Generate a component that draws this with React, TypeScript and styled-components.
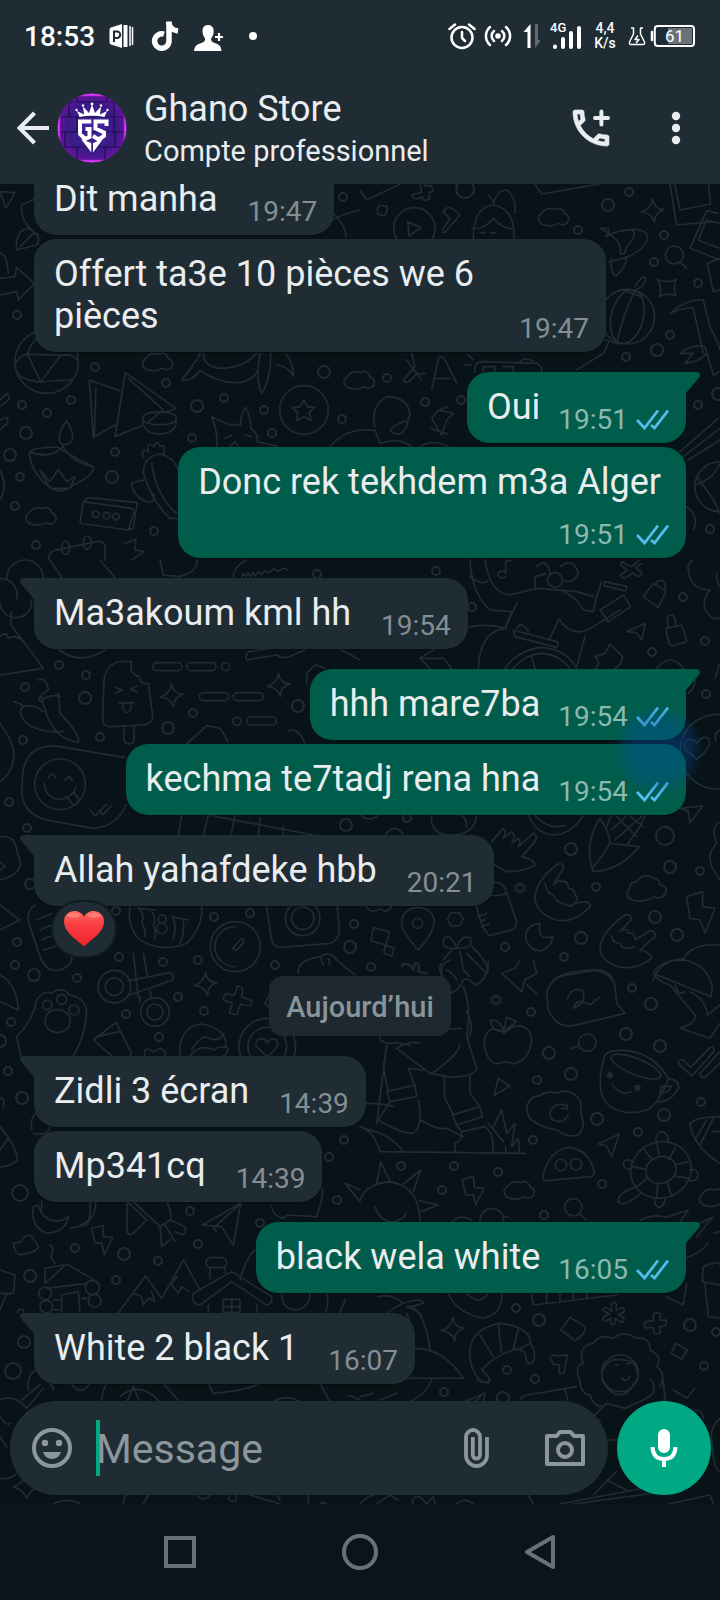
import React from 'react';
import styled, { createGlobalStyle, css } from 'styled-components';

const color = {
  bar: '#202c33',
  wall: '#081318',
  doodle: '#212c32',
  nav: '#0b141a',
  incoming: '#202c33',
  outgoing: '#005c4b',
  text: '#e9edef',
  muted: '#848e94',
  icon: '#8c979d',
  tick: '#53bdeb',
  accent: '#00a884',
};

const GlobalStyle = createGlobalStyle`
  * { box-sizing: border-box; }
  body {
    margin: 0;
    background: ${color.nav};
    font-family: Roboto, "Noto Sans", sans-serif;
    color: ${color.text};
  }
  button { font: inherit; color: inherit; background: none; border: 0; padding: 0; }
  svg { display: block; flex: none; }
`;

const Screen = styled.div`
  display: flex;
  flex-direction: column;
  height: 100vh;
`;

const StatusBar = styled.div`
  display: flex;
  align-items: center;
  justify-content: space-between;
  flex: none;
  height: 72px;
  padding: 0 25px 0 24px;
  background: ${color.bar};
  color: #fff;
`;

const StatusGroup = styled.div<{ $gap: number }>`
  display: flex;
  align-items: center;
  gap: ${(p) => p.$gap}px;
`;

const Clock = styled.time`
  width: 68px;
  padding-top: 2px;
  font-size: 28px;
  font-weight: 500;
  line-height: 32px;
`;

const Signal = styled.div`
  display: grid;
  width: 34px;
  > * { grid-area: 1 / 1; }
`;

const NetworkLabel = styled.span`
  align-self: start;
  padding-left: 2px;
  font-size: 13px;
  font-weight: 500;
  line-height: 12px;
`;

const Speed = styled.div`
  width: 30px;
  font-size: 14px;
  font-weight: 500;
  line-height: 15px;
  text-align: center;
`;

const BatteryBox = styled.div`
  display: grid;
  > * { grid-area: 1 / 1; }
`;

const BatteryLevel = styled.span`
  padding-left: 4px;
  font-size: 17px;
  line-height: 24px;
  text-align: center;
`;

const AppBar = styled.header`
  display: flex;
  align-items: center;
  flex: none;
  height: 112px;
  padding: 0 20px 0 16px;
  background: ${color.bar};
`;

const BackButton = styled.button`
  display: flex;
  align-items: center;
  gap: 7px;
`;

const Contact = styled.div`
  display: flex;
  flex: 1;
  flex-direction: column;
  gap: 4px;
  min-width: 0;
  padding-left: 17px;
  white-space: nowrap;
`;

const ContactName = styled.h1`
  margin: 0;
  font-size: 36px;
  font-weight: 400;
  line-height: 42px;
`;

const ContactKind = styled.p`
  margin: 0;
  font-size: 29px;
  line-height: 34px;
`;

const BarActions = styled.div`
  display: flex;
  gap: 37px;
`;

const Chat = styled.main`
  position: relative;
  display: flex;
  flex: 1;
  flex-direction: column;
  min-height: 0;
  overflow: hidden;
  background: ${color.wall};
`;

const Wallpaper = styled.svg`
  position: absolute;
  inset: 0;
  width: 100%;
  height: 100%;
`;

const MessageList = styled.ol`
  position: relative;
  display: flex;
  flex: 1;
  flex-direction: column;
  justify-content: flex-end;
  gap: 20px;
  min-height: 0;
  margin: 0;
  padding: 0 34px 17px;
  overflow: hidden;
  list-style: none;
  > * { flex: none; }
`;

const Group = styled.li<{ $out?: boolean }>`
  display: flex;
  flex-direction: column;
  align-items: ${(p) => (p.$out ? 'flex-end' : 'flex-start')};
  gap: 4px;
`;

const Bubble = styled.article<{ $out?: boolean; $tail?: boolean; $stacked?: boolean }>`
  position: relative;
  display: flex;
  align-items: flex-end;
  max-width: 572px;
  padding: 14px 17px 7px 20px;
  border-radius: 22px;
  background: ${(p) => (p.$out ? color.outgoing : color.incoming)};
  box-shadow: 0 1px 1px rgba(0, 0, 0, 0.3);
  ${(p) => p.$tail && (p.$out ? 'border-top-right-radius: 0;' : 'border-top-left-radius: 0;')}
  ${(p) =>
    p.$stacked &&
    css`
      flex-direction: column;
      gap: 8px;
    `}
`;

const BubbleText = styled.p<{ $stacked?: boolean }>`
  flex: 1;
  margin: 0;
  padding: 0 ${(p) => (p.$stacked ? 8 : 0)}px 8px 0;
  font-size: 36px;
  line-height: 42px;
`;

const Meta = styled.span<{ $out?: boolean }>`
  display: flex;
  align-items: center;
  gap: 8px;
  margin-left: ${(p) => (p.$out ? 18 : 30)}px;
  font-size: 28px;
  line-height: 32px;
  color: ${(p) => (p.$out ? '#8cb8b0' : color.muted)};
`;

const Tail = styled.svg<{ $out?: boolean }>`
  position: absolute;
  top: 0;
  ${(p) => (p.$out ? 'right: -14px;' : 'left: -14px; transform: scaleX(-1);')}
`;

const TouchSpot = styled.span`
  position: absolute;
  top: -40px;
  right: -18px;
  width: 92px;
  height: 92px;
  border-radius: 50%;
  background: radial-gradient(closest-side, rgba(0, 80, 160, 0.4) 45%, rgba(0, 80, 160, 0.3) 72%, rgba(0, 80, 160, 0));
  pointer-events: none;
`;

const Reaction = styled.button`
  position: relative;
  display: grid;
  place-items: center;
  width: 66px;
  height: 58px;
  margin: -10px 0 -2px 17px;
  border: 2px solid #101b21;
  border-radius: 29px;
  background: ${color.incoming};
`;

const DayMark = styled.li`
  align-self: center;
  padding: 15px 17px 13px;
  border-radius: 14px;
  background: #1d282f;
  font-size: 29px;
  font-weight: 500;
  line-height: 32px;
  color: #89949a;
`;

const Composer = styled.form`
  position: relative;
  display: flex;
  flex: none;
  gap: 9px;
  padding: 0 9px 9px 10px;
`;

const Field = styled.div`
  display: flex;
  flex: 1;
  align-items: center;
  min-width: 0;
  height: 94px;
  padding: 0 23px 0 18px;
  border-radius: 47px;
  background: ${color.bar};
  color: ${color.icon};
`;

const Caret = styled.span`
  flex: none;
  width: 4px;
  height: 56px;
  margin-left: 20px;
  background: ${color.accent};
`;

const TextBox = styled.input`
  flex: 1;
  min-width: 0;
  margin-left: -4px;
  padding: 2px 0 0;
  border: 0;
  outline: 0;
  background: none;
  color: ${color.text};
  font: 41px/48px Roboto, sans-serif;
  &::placeholder { color: ${color.icon}; opacity: 1; }
`;

const FieldActions = styled.div`
  display: flex;
  align-items: center;
  gap: 56px;
`;

const MicButton = styled.button`
  display: grid;
  place-items: center;
  flex: none;
  width: 94px;
  height: 94px;
  border-radius: 50%;
  background: ${color.accent};
`;

const NavBar = styled.nav`
  display: flex;
  flex: none;
  height: 96px;
  padding: 0 90px;
  background: ${color.nav};
`;

const NavButton = styled.button`
  display: grid;
  flex: 1;
  place-items: center;
`;

/* ---------- wallpaper ---------- */

type Ring = [number, number, number];

const rings: Ring[] = [
  [343, 197, 4], [17, 315, 4], [95, 367, 4], [166, 383, 4], [197, 406, 6], [224, 398, 4], [264, 410, 4],
  [272, 433, 4], [324, 372, 6], [342, 419, 4], [192, 438, 4], [22, 405, 4], [71, 400, 4], [47, 413, 4],
  [26, 433, 6], [10, 455, 6], [115, 452, 4], [112, 477, 6], [20, 477, 4], [15, 506, 4], [154, 531, 4],
  [36, 545, 4], [629, 192, 4], [608, 205, 6], [578, 230, 4], [664, 235, 4], [654, 262, 4], [698, 283, 4],
  [670, 335, 4], [657, 350, 6], [626, 357, 4], [387, 378, 4], [425, 402, 4], [461, 400, 4], [698, 405, 4],
  [710, 529, 4], [465, 189, 9], [718, 394, 6], [59, 665, 4], [86, 675, 4], [25, 687, 4], [85, 698, 6],
  [23, 740, 4], [100, 737, 4], [168, 728, 6], [193, 713, 4], [298, 706, 6], [9, 802, 4], [27, 828, 4],
  [346, 825, 6], [317, 574, 4], [30, 884, 5], [116, 911, 4], [214, 917, 4], [250, 913, 4], [354, 924, 4],
  [17, 942, 4], [119, 957, 4], [163, 962, 4], [198, 960, 4], [15, 965, 4], [34, 975, 6], [275, 965, 4],
  [350, 947, 6], [436, 571, 4], [472, 607, 4], [683, 597, 4], [705, 641, 4], [652, 652, 4], [706, 694, 4],
  [407, 818, 4], [571, 849, 6], [665, 836, 9], [670, 867, 6], [700, 871, 4], [520, 888, 4], [596, 887, 4],
  [655, 917, 6], [677, 935, 6], [581, 938, 6], [505, 947, 4], [564, 957, 4], [371, 967, 4], [77, 978, 4],
  [178, 997, 4], [126, 1014, 4], [204, 1011, 4], [159, 1037, 4], [11, 1022, 4], [8, 1071, 4], [22, 1098, 6],
  [0, 1041, 6], [20, 1193, 8], [190, 1211, 4], [329, 1157, 4], [344, 1140, 4], [337, 1200, 4],
  [75, 1248, 4], [198, 1244, 4], [124, 1254, 6], [158, 1261, 4], [30, 1276, 6], [116, 1280, 4],
  [260, 1223, 4], [24, 1342, 6], [13, 1371, 8], [496, 1000, 4], [531, 1012, 4], [632, 988, 4],
  [651, 1004, 6], [626, 1034, 6], [549, 1053, 6], [660, 1046, 6], [571, 1074, 6], [537, 1080, 4],
  [597, 1119, 6], [664, 1115, 6], [701, 1102, 4], [638, 1132, 4], [533, 1140, 4], [602, 1184, 4],
  [401, 1166, 4], [454, 1166, 4], [498, 1172, 4], [442, 1190, 4], [544, 1215, 4], [516, 1308, 4],
  [539, 1320, 6], [690, 1325, 6], [507, 1370, 4], [535, 1379, 4], [704, 1366, 4], [444, 1392, 4],
  [503, 1398, 6], [716, 1332, 4],
];

const Cloud = ({ x, y }: { x: number; y: number }) => (
  <path transform={`translate(${x} ${y})`} d="M-38 22Q-58 5-38-10Q-25-30 0-22Q22-32 30-10Q52 0 38 20Q25 28 12 20Q-10 34-38 22Z" />
);
const Sparkle = ({ x, y }: { x: number; y: number }) => (
  <path transform={`translate(${x} ${y})`} d="M0-35Q4-4 34-4Q6 4 6 34Q-4 6-34 4Q-4-6 0-35Z" />
);

const Sheet = ({ x, y, children }: { x: number; y: number; children: React.ReactNode }) => (
  <g transform={`translate(${x} ${y}) scale(0.3333)`} strokeWidth="5">
    {children}
  </g>
);

const Doodles = () => (
  <Wallpaper viewBox="0 184 720 1320" preserveAspectRatio="xMidYMin slice" aria-hidden="true" fill="none" stroke={color.doodle} strokeLinecap="round" strokeLinejoin="round">
    <g strokeWidth="2">
      {rings.map(([cx, cy, r]) => (
        <circle key={`${cx}-${cy}`} cx={cx} cy={cy} r={r} />
      ))}
    </g>
    <Sheet x={0} y={180}>
      <circle cx="140" cy="545" r="95" />
      <path d="M82 522L182 526L122 606ZM82 522Q100 470 140 452M182 526Q225 520 234 545M122 606Q60 600 50 575M82 522Q60 525 46 550M122 606Q180 600 215 600" />
      <Cloud x={475} y={545} />
      <Cloud x={125} y={1008} />
      <Cloud x={1080} y={600} />
      <path d="M268 600L358 632M268 600L280 772L345 735M288 622L283 765M376 578L528 685L500 696M376 578L345 770L430 735M385 595L490 690L445 725" />
      <path d="M430 715a50 16 0 1 0 98 0a50 16 0 1 0 -98 0V735Q440 762 480 762Q520 760 528 735V715" />
      <path d="M545 600Q590 545 600 520M545 600Q575 605 600 572Q660 612 720 608Q760 600 775 570M610 520Q610 560 660 565Q730 565 770 520M780 520Q765 600 785 640Q812 600 812 520M830 555Q870 560 880 590Q880 550 860 525" />
      <path d="M650 800Q655 760 635 710L690 735Q710 730 722 738Q722 700 737 682Q755 720 752 745Q780 765 770 785L830 798M675 775l20-8M735 765l20 5M690 800l15-15 10 15" />
      <circle cx="912" cy="690" r="73" />
      <path d="M912 660l10 20 22 2-16 15 5 25-22-12-20 12 2-24-16-15 24-3zM990 800Q1030 755 1080 750" />
      <path d="M88 815Q90 870 140 915Q180 950 220 915Q285 885 280 860Q200 820 175 802Q110 800 88 815Q150 840 190 800M280 860Q220 850 190 800M200 722Q160 780 190 795Q240 790 200 722M120 870L150 905 175 868 200 905 225 890 210 925H150Z" />
      <path d="M430 830Q420 800 445 815Q440 780 462 800Q470 775 480 800Q500 790 490 825M430 880Q430 830 480 822Q520 830 535 870M430 880Q460 970 510 1015H535M455 850Q470 950 530 1000M395 910Q400 950 440 965Q470 970 460 940M395 910L430 900" />
      <path d="M250 965L395 985Q405 990 400 1005L385 1050L240 1030ZM250 965L265 953L412 968L400 1045L385 1050" />
      <circle cx="287" cy="1003" r="10" /><circle cx="320" cy="1007" r="10" /><circle cx="348" cy="1010" r="10" />
      <path d="M145 1140Q145 1110 180 1108L290 1085Q318 1080 315 1110V1140M373 1090L408 1078 405 1110 433 1115 395 1140" />
      <ellipse cx="197" cy="1103" rx="12" ry="20" /><ellipse cx="262" cy="1088" rx="12" ry="20" />
      <path d="M0 345L50 335 55 360 103 310 50 262 45 290 0 295M0 35L45 38 18 85ZM50 210Q45 150 85 145Q130 170 110 195ZM60 200L100 160M65 75Q60 130 115 165M65 75L110 55M980 130Q1030 100 1080 90M1000 100Q1040 140 1038 172M0 220Q20 220 25 280M0 660L20 640Q35 655 20 665L0 680M0 720L20 712Q30 730 15 735L0 750M0 870Q25 920 0 960" />
    </Sheet>
    <Sheet x={360} y={180}>
      <path d="M0 30L20 60 125 10M155 45l30-8-5-25M155 45q10 20 30 5l8 12 15-5 0-20q20 0 5-20l-20 0M52 85l8-10 22 5-3 20-8 8-18-6z" />
      <circle cx="163" cy="145" r="62" />
      <path d="M143 125l40 18-36 25zM250 95q10-20 30-8l20 18-45 52q-10 0-6-10l20-30z" />
      <path d="M340 175Q340 80 400 75Q465 85 462 175M400 115Q370 150 345 145M400 115Q430 150 460 145M385 45Q405 65 400 75Q410 30 440 30Q470 50 465 100M335 145h10M360 158h15M392 158h15" />
      <Cloud x={583} y={110} />
      <path d="M525 12L545 42 720 12" />
      <Sparkle x={878} y={92} />
      <path d="M930 12L950 135 1060 125M945 15L960 90 1052 72 1045 12M1075 100L1040 92 990 205 1080 240M1080 130L1040 120 1015 180 1080 205M1080 235L1042 250 1060 335 1080 330" />
      <path d="M720 145Q790 180 780 220Q795 230 800 200Q840 160 810 148M720 145Q760 140 740 165M738 170Q770 150 820 148Q870 150 862 180Q840 230 745 245M755 235Q750 280 768 288Q800 260 800 230" />
      <circle cx="943" cy="225" r="27" />
      <path d="M960 245l20 20M893 298Q922 312 948 298Q938 320 948 348Q920 335 898 350Q908 325 893 298Z" />
      <circle cx="802" cy="410" r="82" />
      <ellipse cx="802" cy="410" rx="48" ry="82" transform="rotate(14 802 410)" />
      <path d="M825 332Q790 400 770 490M790 330L845 350M735 480L780 492M745 490L730 520 650 570M825 320Q850 280 857 295Q855 320 830 328" />
      <path d="M155 520L165 560 130 600Q140 620 165 585L195 580M140 540L185 600M215 630L235 535Q245 525 255 540L290 610M225 595H270" />
      <path d="M345 575Q340 545 370 545L530 550Q548 560 545 575M370 575V560H405V575M430 560h30v15M480 545q10-15 40-2M315 555h20M325 525l15 15" />
      <path d="M45 740Q30 680 80 650Q140 650 150 700L140 740Q120 780 90 750Q100 735 145 720M0 750H45L60 790Q120 770 155 800M180 800Q220 775 265 800" />
      <path d="M215 715L245 765 260 720 280 700 235 690ZM240 690l20-10M262 762L210 745" />
      <path d="M930 400Q980 355 1030 360L1050 440Q1080 500 1080 510M930 400Q980 380 1000 385L1030 520M960 520Q1000 490 1035 500L1060 585 1080 575M960 520L1000 520 975 550Q1020 545 1040 520" />
      <path d="M960 815L1075 715M970 830L1080 745M985 840L1080 780M1005 915Q1060 900 1080 850M1010 890Q1060 950 1080 1000M980 980Q1020 1010 1000 1050" />
      <circle cx="1080" cy="920" r="75" />
    </Sheet>
    <Sheet x={0} y={560}>
      <path d="M20 55a50 50 0 0 1 110 0M0 130a45 45 0 1 0 95-10M33 155V195L130 325 0 345M0 230Q20 210 25 235Q50 220 75 250M0 55a50 50 0 0 1 50 60M150 0L185 52M300 0L345 52" />
      <path d="M395 305Q320 295 312 360L308 480Q310 500 335 500L430 495Q460 490 458 465L445 370Q420 375 418 350Q385 340 395 305ZM372 500V540Q375 552 388 552Q402 550 402 540V498M345 382l22 8-20 10M412 378l-20 10 20 8M358 430L402 428M368 432Q370 458 382 458Q395 455 393 430" />
      <rect x="458" y="308" width="88" height="24" rx="12" /><rect x="560" y="308" width="88" height="24" rx="12" />
      <rect x="598" y="398" width="88" height="24" rx="12" /><rect x="700" y="398" width="90" height="24" rx="12" />
      <rect x="740" y="471" width="88" height="24" rx="12" />
      <circle cx="677" cy="320" r="12" /><circle cx="711" cy="484" r="12" />
      <Sparkle x={515} y={407} />
      <Sparkle x={836} y={375} />
      <path d="M115 360Q140 350 145 390Q110 410 120 425Q150 400 180 410M125 410Q150 540 235 547Q240 520 180 460L175 400M42 425Q65 430 70 440Q50 460 80 490Q120 520 190 515M70 440Q100 430 130 455" />
      <path d="M375 593L175 559Q80 550 68 640L65 700Q70 760 140 780L280 805Q350 800 378 735" />
      <circle cx="180" cy="673" r="76" />
      <path d="M132 670Q140 720 185 718Q220 710 228 680M145 655q12-25 22 0M195 660q12-20 22 2M200 710l20 25q20 0 15-20l-15-20M270 750l15 18 35-35M298 752l10 12 26-26" />
      <path d="M560 552L620 497 660 505 685 545M865 515q15-15 40 15l10 20M920 370l0-30 25-25 30 10M545 765L535 825M625 765L610 825M705 765L693 825M780 775L775 825M625 765L940 825M850 800V825" />
      <path d="M0 830Q45 825 50 870L62 910Q60 945 0 960M0 905L15 920 0 930M0 1035L58 1080 0 1110M0 490Q50 560 40 600Q35 640 0 665" />
      <path d="M105 1035Q80 1050 85 1085L120 1190Q140 1240 180 1230Q220 1215 215 1190M110 1080L155 1060M120 1110L155 1095M125 1140L160 1125M130 1170L170 1158" />
      <path d="M390 1040Q380 1100 420 1140Q490 1180 560 1150Q610 1100 605 1040M415 1045L465 1050M420 1050q15 20 5 40 15 20 10 40M455 1055q15 20 5 40 10 20 5 40M515 1070L565 1080M520 1075q10 30 0 60M550 1080q5 40-10 70" />
      <circle cx="487" cy="1077" r="12" /><circle cx="485" cy="1105" r="16" />
      <circle cx="706" cy="1160" r="75" />
      <path d="M705 1220A60 60 0 0 1 705 1100M698 1165l25-28q15 0 5 15l-20 20z" />
      <path d="M800 1040L815 1140Q820 1165 850 1162L990 1150Q1018 1140 1018 1110L1012 1040M895 1240Q890 1200 960 1190Q990 1170 1010 1200L1065 1245M960 1190l10 25M985 1195l5 20" />
      <circle cx="908" cy="1075" r="52" /><circle cx="908" cy="1075" r="34" />
      <path d="M480 0L490 45 540 50Q600 30 590 0M700 50Q700 20 740 0M725 50l5-10 8 10 5-12 8 12 8-14 6 12 10-14 8 10 14-12 6 6 20-12 10 8 20-10 10 6M175 267Q240 320 320 267M740 300L830 285Q850 300 880 285L915 270M740 300Q735 285 745 275L800 267M1020 267L1080 300" />
    </Sheet>
    <Sheet x={360} y={560}>
      <path d="M330 0Q335 100 390 150L455 155 435 205 470 130M375 0Q390 100 450 105L530 85M330 50Q370 80 385 60M435 50a12 10 0 1 1 2-10V5L457 0" />
      <circle cx="585" cy="60" r="22" />
      <path d="M525 90V50L560 40M530 20Q560-10 570 40M600 20Q640-10 655 40Q640 75 610 60M600 90Q650 110 670 150L700 155 710 110 725 65M530 85Q600 90 650 95L700 110M570 235L597 178Q640 240 700 200L780 150M735 65l65 15q0 15-8 12l-60-15zM720 150L790 105 812 140 745 185ZM650 320L675 230" />
      <path d="M180 295L325 205M210 325L180 295H250L275 325M355 325Q360 210 440 205Q380 190 330 200M460 210L590 245Q600 255 590 262L465 230ZM470 205q15-25 35 10M435 325Q480 265 550 262Q620 270 650 325M460 325Q500 280 550 280Q600 285 630 325M515 290l10 35" />
      <path d="M785 5l30 15 25-20M785 5l-3 10 20 15-20 15q5 15 20 5l15-10 20 10q15-5 5-15l-15-12 18-12M850 110L880 70 918 95 895 142ZM890 75Q885 60 905 62Q920 65 915 90M985 30Q990 90 1050 90M1000 0Q980 10 985 30M1050 90Q1010 140 1060 175H1080M1070 40Q1070 70 1080 80" />
      <path d="M918 205L965 195 980 240Q978 250 960 250L935 258Q925 255 918 205ZM925 200Q915 165 935 165Q950 170 945 195M800 215L857 190 845 240 830 218ZM705 290L735 280 750 252 788 290Q785 315 765 325M705 290l12 20-10 15M890 325Q930 275 970 325M985 400Q1010 380 1003 350M1065 355L1080 310" />
      <circle cx="1072" cy="575" r="112" />
      <path d="M1010 598L975 565Q970 540 990 538Q1005 540 1012 550Q1025 525 1045 535Q1060 560 1010 598ZM960 745L1028 738 990 788 985 755ZM1080 510Q1060 520 1068 545" />
      <path d="M215 765Q210 820 260 825Q340 830 350 770M300 765Q320 770 320 800M505 765Q530 825 585 825Q640 820 670 765M525 765Q560 810 615 797M0 765Q30 790 55 765M75 825Q105 785 130 825" />
      <path d="M700 935Q670 850 720 775Q750 820 750 850Q700 930 700 915M750 850L838 860Q780 930 705 935M740 800L755 765M855 770L840 800 800 855M770 770L830 830M810 768L850 800M765 840L850 765M755 810L800 768" />
      <path d="M395 845L430 805Q440 815 430 835L455 815Q470 825 455 850L475 835Q485 845 475 860L520 820Q535 825 525 845L485 890Q525 900 525 915Q500 935 440 935Q410 920 395 905" />
      <path d="M525 1010Q530 960 590 915Q605 905 612 922L580 975Q600 955 605 965Q625 960 625 985Q645 985 645 1005Q660 1010 645 1030L680 1025Q700 1035 685 1045Q640 1090 590 1080Q525 1060 525 1010ZM555 970Q560 1000 580 1005Q590 1030 610 1030Q630 1045 645 1030" />
      <path d="M720 1160Q730 1110 795 1065Q810 1060 815 1078L780 1115Q800 1100 805 1120Q825 1115 825 1140L870 1112Q890 1115 885 1130L840 1170Q870 1175 875 1195Q830 1230 780 1222Q720 1205 720 1160ZM755 1130Q760 1150 780 1150Q790 1175 825 1160" />
      <path d="M815 1020Q790 1005 810 985Q810 965 830 965Q850 935 880 955Q900 955 900 975Q925 980 917 1000Q905 1020 885 1010Q850 1030 815 1020ZM980 1010L1028 995V1040L1065 1045 1035 1118 1020 1080 990 1075Z" />
      <path d="M350 1040Q370 1120 390 1127L455 1110Q470 1105 470 1085L435 985Q420 960 390 970M355 1070l25-10M360 1085l15-6M365 1100l22-8M390 1005Q420 1010 440 1000M20 1040q15 25 40 5 15 20 35-5" />
      <path d="M175 1170Q120 1110 125 1085Q130 1045 175 1042Q220 1048 223 1085Q220 1120 175 1170ZM262 1078l12-20h24l12 20-12 20h-24zM540 1090Q495 1095 497 1135Q510 1175 545 1172Q575 1160 578 1130Q530 1145 540 1090ZM40 1103L88 1115 78 1155 33 1143ZM75 1155L102 1165 95 1188 72 1180Z" />
      <circle cx="173" cy="1090" r="15" />
      <path d="M290 1165Q240 1170 252 1135Q275 1120 290 1165Q305 1120 330 1135Q345 1165 290 1165ZM250 1200L275 1170M245 1210Q230 1230 255 1260M300 1175L310 1230 330 1250M335 1160Q380 1200 385 1235M290 1260Q280 1240 260 1230M320 1180L380 1240M125 1220Q140 1200 160 1225Q160 1205 175 1210Q180 1225 175 1235L200 1240M880 1260Q900 1200 975 1195M975 1190Q1000 1150 1080 1155M1080 785Q1050 800 1070 850Q1040 880 1055 920L1080 960M580 1260Q620 1230 700 1230Q750 1240 755 1260" />
    </Sheet>
    <Sheet x={0} y={960}>
      <path d="M50 230Q100 180 110 120Q130 90 155 100Q185 75 210 105Q260 115 260 160Q255 230 220 288M50 230L62 288" />
      <ellipse cx="173" cy="183" rx="38" ry="34" />
      <circle cx="142" cy="135" r="14" /><circle cx="185" cy="118" r="15" /><circle cx="222" cy="150" r="15" />
      <circle cx="343" cy="80" r="49" /><circle cx="343" cy="80" r="27" /><circle cx="465" cy="156" r="43" /><circle cx="465" cy="156" r="24" />
      <path d="M385 62L510 38Q525 45 518 60L390 105M415 112L400-20M430-20L442 48M420 112V130M450 92L455 115" />
      <path d="M280 240L348 187 395 280 390 288M280 240L335 288M290 230L360 215" />
      <Sparkle x={617} y={72} />
      <path d="M712 78Q725 78 728 88L725 110 755 122Q755 138 748 138L722 132 712 162Q700 166 688 158L698 130 670 120Q672 104 680 100L703 106Z" />
      <path d="M540 288Q535 200 605 192Q680 205 678 260M615 230Q660 250 672 220M575 270Q590 240 615 230M570 288Q600 250 640 270Q660 255 685 265Q685 280 670 288M0 45Q50 70 55 150L0 125M435 288Q430 265 445 268L460 275 480 265Q500 270 495 288M810 100L795 130 812 145" />
      <circle cx="802" cy="260" r="85" /><circle cx="802" cy="260" r="58" />
      <path d="M802 290L768 258Q765 235 785 235Q798 238 802 248Q810 235 825 237Q850 250 802 290Z" />
      <path d="M100 740Q90 800 140 820Q200 815 205 770Q180 790 150 780Q120 765 115 735ZM125 725V750M240 795Q290 780 287 725M210 805L260 795Q275 770 270 725" />
      <path d="M382 725V815Q385 830 400 820L440 780M382 725L440 780M400 725L480 800M500 725Q520 770 510 780L480 800L485 860 510 840M510 780L555 800Q560 815 550 825L525 815M495 795L525 845" />
      <path d="M607 795L722 730 700 855 665 800ZM722 730L640 805 650 815M815 740Q820 770 850 775L860 765 950 770Q970 710 968 690L955 672M1035 670L1080 725M1035 670L1080 690M1020 820L1080 790" />
      <path d="M40 850L65 845Q70 825 90 825L100 835 115 860Q110 875 90 878L60 885Q45 880 40 850ZM275 805L310 797V830L338 833 313 885 305 850 285 848ZM150 855Q165 865 155 880Q150 895 165 910" />
      <path d="M135 970L200 912 290 965M140 985L262 970M135 925V970M135 925L190 915M185 1058V1005L235 995 240 1055M160 1020h20M245 1015h15M160 1050h22M0 930L45 945 40 1000 0 1000M20 1000L0 1050" />
      <circle cx="135" cy="1000" r="19" /><circle cx="139" cy="1040" r="19" /><circle cx="277" cy="983" r="21" /><circle cx="284" cy="1022" r="19" />
      <path d="M355 1058L437 948 485 1015 550 900 600 990M400 1000l25 10 5 25 15-20 20 10-10-30M530 950l-15 25 20 25 10-20 20 15" />
      <path d="M580 1000L695 935 815 1010Q820 1030 800 1035L695 965 600 1035Q570 1030 580 1000ZM625 1035V1058M770 1035V1058M670 1018h50v40h-50zM695 1018v40M670 1040h50M630 955V923M675 940V923" />
      <rect x="618" y="893" width="62" height="30" rx="15" />
      <path d="M720 960Q740 890 765 870M845 1000Q845 1050 890 1050Q930 1040 930 1000M980 1000Q990 1030 975 1058M1035 1020L1020 1058M0 500Q50 560 52 600Q40 615 0 622M25 535L0 570M95 510Q90 470 110 460M100 520Q140 530 150 500M0 415Q15 410 10 440M52 1058a10 10 0 1 1 18 5M85 1290Q80 1250 105 1230Q160 1270 160 1290" />
    </Sheet>
    <Sheet x={360} y={960}>
      <path d="M245 50Q240 10 270 0M270 100Q300 90 310 60Q320 50 345 75Q385 60 385 0M310 80Q335 140 320 230L350 325Q340 355 260 350L210 340 110 265Q150 240 180 250M305 205L200 210M320 155Q345 200 325 235M60 230Q60 255 110 248L150 255M80 255L70 320 85 400M80 255L50 490M145 325L165 380M145 325L190 330M80 395L165 375 170 410 90 425ZM90 425L55 480Q120 520 160 520Q190 500 175 420M300 255Q290 290 215 340M253 350V410L280 465M330 350L330 400 360 440M278 465L360 440 368 470 290 495ZM290 495L305 515 375 500M305 515Q310 540 285 550V575M375 500Q405 520 398 575M180 480Q230 510 260 505Q290 520 310 530M20 430Q70 430 100 440M0 500Q40 510 60 575L497 580M10 505Q90 520 130 575" />
      <path d="M385 490L430 545M400 500L425 450 440 520 465 490 455 560 475 535 478 575M437 560V575" />
      <path d="M425 40L465 25 480 0M425 40L485 95 495 60 530 40 520 0M500 75L530 100M125 15Q145 5 160 30Q160 10 175 10L175 35 200 40" />
      <path d="M430 215Q380 190 373 245Q375 300 410 312Q440 300 460 312Q510 300 515 240Q510 190 460 200L430 220ZM430 215Q425 180 392 180Q395 215 430 215M430 215L440 172 470 185Z" />
      <path d="M560 100Q570 55 620 45L710 30Q755 30 765 80L770 130 795 160 640 197Q590 205 565 150ZM622 115Q640 75 670 95Q680 130 640 145Q650 110 690 135Q700 125 718 112" />
      <path d="M880 40Q900 0 970 0Q1040 10 1057 80L1053 110ZM880 40Q900 70 930 75L1005 165Q1010 180 985 195L960 205 1050 235 1080 190M945 75Q955 110 975 95M990 95Q1040 120 1042 165L1080 135" />
      <circle cx="682" cy="248" r="26" />
      <path d="M656 258l-24 8M735 285Q700 400 750 440Q800 470 860 450Q900 430 925 355Q880 280 800 272Q750 268 735 285ZM925 355Q960 360 955 385Q930 430 890 425M900 400L905 380 935 378Q925 400 900 400M755 370Q780 410 815 395" />
      <ellipse cx="828" cy="320" rx="80" ry="24" transform="rotate(22 828 320)" />
      <g fill={color.doodle}><circle cx="750" cy="346" r="7" /><circle cx="833" cy="383" r="7" /></g>
      <path d="M955 310Q955 295 970 300L992 322 1050 262Q1065 260 1062 275L995 348ZM1080 275L1020 340Q1020 355 1035 352L1080 310" />
      <path d="M500 440Q510 405 540 408Q560 390 590 400Q630 380 660 420Q665 450 662 460Q680 500 655 525Q620 535 590 510Q530 500 505 470ZM620 440Q600 425 580 440Q560 465 580 480Q610 495 625 465M605 445L622 447 622 432" />
      <path d="M415 355L450 378 403 405ZM715 552L778 522 755 590 740 558ZM548 655Q560 580 620 562Q690 565 703 640Q700 650 690 650L560 662Q548 662 548 655Z" />
      <circle cx="603" cy="615" r="17" /><circle cx="648" cy="613" r="17" />
      <g transform="rotate(-20 903 630)"><ellipse cx="903" cy="630" rx="92" ry="84" /><ellipse cx="903" cy="630" rx="46" ry="40" /></g>
      <path d="M890 548L898 588M945 565L925 600M985 605L945 615M988 655L945 648M935 710L922 668M890 715L893 672M830 680L862 655M818 620L858 628M850 565L875 598M888 545Q888 515 908 515Q925 520 925 548M818 605Q790 590 790 615Q795 630 815 628M990 630Q1015 625 1015 648Q1010 665 985 662M830 680Q770 700 775 725Q790 745 845 698M885 718Q880 740 900 742Q915 735 915 715" />
      <path d="M990 490Q1010 470 1080 470M990 490Q1000 560 1080 610M1005 540L1040 480M1020 555L1060 475M1060 515h20M307 660L340 648 343 682 372 685 347 735 340 705 318 705Z" />
      <Cloud x={480} y={690} />
      <Cloud x={1066} y={712} />
      <path d="M0 720Q20 670 90 665Q180 680 180 786M62 605L50 670M62 605L90 665M182 630L130 672M182 630L160 695M235 735L178 722M235 735L183 755M45 740Q60 785 100 786Q135 775 138 760M275 786Q300 760 335 780M360 786Q360 745 400 745Q435 755 430 786M430 770h15M660 762l18 18" />
      <circle cx="640" cy="742" r="26" />
      <path d="M840 780Q880 760 920 772L985 750 960 786M1020 790L1058 772 1010 830M1045 850Q1020 880 980 893M1060 820L1080 815M1030 920Q1080 900 1080 915M1030 920L1027 965 1080 975M1035 970L1045 1070 1080 1075M920 1010L970 1035 980 970" />
      <path d="M55 1010Q100 1000 130 1030Q190 1010 190 1030Q160 1040 140 1040Q180 1055 185 1070M130 1030Q90 1050 85 1058M140 1060Q160 1110 165 1165L210 1170Q200 1080 160 1040M165 1165Q250 1165 310 1255H130M265 1000Q290 1060 370 1075Q430 1060 425 998M320 1000Q360 1040 385 1000M515 1000L520 1035 770 1005M560 1000V1030M600 1000V1026M640 1000V1020M680 1000V1015" />
      <Sparkle x={278} y={1108} />
      <path d="M330 1195Q320 1110 420 1090Q510 1100 512 1150Q530 1180 520 1205Q500 1220 498 1190Q490 1160 460 1170Q400 1190 365 1230Q400 1260 385 1270Q340 1260 330 1195ZM360 1125L400 1190M415 1092L425 1178M475 1105L460 1168M512 1150L480 1165" />
      <path d="M630 1072L675 1100Q680 1120 645 1142L603 1110ZM570 1195Q575 1180 590 1188L622 1185 612 1240 598 1240V1215L580 1212ZM948 1150L982 1170 965 1198 933 1180Z" />
      <path d="M755 1055V1032Q762 1022 770 1032L768 1052 785 1042Q798 1045 790 1058L775 1064 792 1075Q795 1088 780 1085L766 1075 764 1092Q754 1098 752 1088L752 1074 738 1084Q725 1080 732 1070L748 1062 730 1052Q728 1040 742 1044ZM880 1062Q890 1055 902 1062L900 1080 918 1080Q922 1092 915 1098L900 1100 902 1118Q890 1125 882 1118L880 1102 856 1104Q850 1092 856 1085L880 1082Z" />
      <path d="M660 1260Q640 1220 670 1210Q650 1160 700 1150Q720 1120 760 1135Q790 1110 830 1135Q870 1130 870 1170Q910 1190 890 1220Q920 1240 900 1280M765 1215h10M800 1210h10M785 1255q15 15 25-5M725 1240Q740 1190 790 1200Q830 1200 832 1240" />
      <circle cx="780" cy="1240" r="55" />
    </Sheet>
    <Sheet x={0} y={1380}>
      <path d="M305 66Q310 0 340 0M360 50Q420 0 480 66M380 66L400 20 420 66M480 0L540 66M620 0L640 40Q760 30 795 0M960 10L990 66M820 66Q860 40 900 66M1045 45L1080 60M215 12Q240 50 270 12M0 60Q40 40 80 85L130 25M65 60L120 15M0 295Q30 300 50 280M0 110Q20 140 30 130M0 170L20 200M40 320Q70 330 80 355Q90 330 110 325M40 320Q70 310 70 295M160 372Q200 350 240 372M370 372Q370 350 380 345M445 345L430 372M590 345Q610 370 630 345M750 345L840 372M925 345V372M830 345l10 15M960 372q10-10 20 0" />
      <circle cx="698" cy="353" r="12" />
    </Sheet>
    <Sheet x={360} y={1380}>
      <path d="M0 50L40 40M60 60L110 40M150 66Q200 40 215 0M310 66L375 40 370 66M345 66L365 45M350 0Q380 15 390 0M485 60Q480 50 500 45L650 20M615 30L625 66M660 0Q660 40 690 45Q700 80 730 80M700 110L740 70 795 85 850 60L880 40Q885 0 870 0M910 0L915 60M940 30L980 55 1005 25M725 0Q780 90 830 0M0 372Q20 350 40 345M50 372L90 345 115 360M160 372Q150 350 180 350L200 372 220 350 225 372M290 372Q315 350 340 372M505 345L520 372M600 372L900 315M640 372L950 330M925 372L1050 345 1060 372M740 300L800 330M700 345L770 275M740 180H770M715 130L720 120M1055 180Q1050 140 1080 115M1055 180Q1060 270 1080 275M1000 90Q1030 90 1030 115" />
    </Sheet>
  </Wallpaper>
);

/* ---------- icons ---------- */

const OfficeIcon = () => (
  <svg width="30" height="30" viewBox="0 0 30 30" fill="none" stroke="#fff">
    <path d="M16 3L5 6.500Q3.500 7 3.500 9V21Q3.500 23 5 23.500L16 27Z" fill="#fff" stroke="none" />
    <path d="M8 21V10.500H11a3 3 0 0 1 0 6.500H8" stroke={color.bar} strokeWidth="2" />
    <path d="M19.500 4V26" strokeWidth="4" />
    <path d="M24 5V25M26.500 6V24" strokeWidth="1.500" />
  </svg>
);

const NoteIcon = () => (
  <svg width="30" height="30" viewBox="0 0 30 30" fill="none" stroke="#fff" strokeWidth="5.500">
    <path d="M14 13.200A7.200 7.200 0 1 0 19 20.200V0.500" />
    <path d="M18.500 1Q19.500 9 28 10" />
  </svg>
);

const PersonIcon = () => (
  <svg width="30" height="30" viewBox="0 0 30 30" fill="#fff">
    <path d="M14 4C10.500 4 8.500 6.500 8.500 10C8.500 13.500 9.800 16 11 17.200C11.500 20 10 21 6 22.500C2 24 0.500 25.500 0 30H27.500C27 25.500 26 24 22 22.500C18 21 16.800 20 17.200 17.200C18.500 16 19.700 13.500 19.700 10C19.700 6.500 17.500 4 14 4Z" />
    <path d="M21 16H29M25 12V20" stroke="#fff" strokeWidth="2.200" />
  </svg>
);

const DotIcon = () => (
  <svg width="30" height="30" viewBox="0 0 30 30" fill="#fff"><circle cx="15" cy="15" r="4" /></svg>
);

const AlarmIcon = () => (
  <svg width="28" height="28" viewBox="0 0 28 28" fill="none" stroke="#fff" strokeWidth="2.500" strokeLinecap="round">
    <circle cx="14" cy="15.500" r="10.500" />
    <path d="M14 10V16L17 19M1.500 7L7 2.500M26.500 7L21 2.500" />
  </svg>
);

const HotspotIcon = () => (
  <svg width="28" height="28" viewBox="0 0 28 28" fill="none" stroke="#fff" strokeWidth="2.500" strokeLinecap="round">
    <circle cx="14" cy="14" r="2.800" fill="#fff" stroke="none" />
    <path d="M10 19A6.500 6.500 0 0 1 10 9M18 9A6.500 6.500 0 0 1 18 19M6 23A12 12 0 0 1 6 5M22 5A12 12 0 0 1 22 23" />
  </svg>
);

const DataIcon = () => (
  <svg width="20" height="26" viewBox="0 0 20 26">
    <path d="M10.500 1V25H7.500V9H3.500Z" fill="#fff" />
    <path d="M15 1V25L21.500 17H18V1Z" fill="#5f696e" />
  </svg>
);

const BarsIcon = () => (
  <svg width="34" height="28" viewBox="0 0 34 28" fill="none" stroke="#fff" strokeWidth="4" strokeLinecap="round">
    <path d="M7 24.500V25M15 17V25M23 11V25M31 6V25" />
  </svg>
);

const FlaskIcon = () => (
  <svg width="18" height="20" viewBox="0 0 18 20" fill="none" stroke="#fff" strokeWidth="1.500" strokeLinejoin="round">
    <path d="M3 2H5.500V8L1.500 16Q1 18.500 3 18.500H15Q17 18.500 16.500 16L12.500 8V2H15" />
    <path d="M10 9.500L7 13.500H11L8 17" strokeWidth="1.500" />
  </svg>
);

const BatteryIcon = () => (
  <svg width="45" height="24" viewBox="0 0 45 24" fill="none">
    <path d="M2 8V16" stroke="#fff" strokeWidth="2.500" strokeLinecap="round" />
    <rect x="18" y="4" width="24" height="16" rx="1" fill="#697277" />
    <rect x="4.800" y="2" width="39.200" height="20" rx="3" stroke="#fff" strokeWidth="2" />
  </svg>
);

const BackIcon = () => (
  <svg width="34" height="34" viewBox="0 0 34 34" fill="none" stroke={color.text} strokeWidth="4">
    <path d="M33 17H4M18.500 2L3.500 17L18.500 32" />
  </svg>
);

const Avatar = () => (
  <svg width="70" height="70" viewBox="0 0 70 70" role="img" aria-label="Ghano Store">
    <defs>
      <radialGradient id="wallGlow">
        <stop offset="0" stopColor="#44289c" />
        <stop offset="0.700" stopColor="#3a1a86" />
        <stop offset="1" stopColor="#66149c" />
      </radialGradient>
      <clipPath id="avatarRound"><circle cx="35" cy="35" r="34.500" /></clipPath>
    </defs>
    <g clipPath="url(#avatarRound)">
      <rect width="70" height="70" fill="url(#wallGlow)" />
      <path d="M0 9H70M0 24H70M0 39H70M0 54H70M20 0V9M50 9V0M12 9V24M57 9V24M20 24V39M57 24V39M8 39V54M58 39V54M20 54V70M48 54V70" stroke="#1d0f4c" strokeWidth="1.200" fill="none" />
      <rect x="0.500" y="0.500" width="69" height="69" rx="10" fill="none" stroke="#9a22c4" strokeWidth="6" opacity="0.600" />
      <rect x="1.500" y="1.500" width="67" height="67" rx="10" fill="none" stroke="#d63af0" strokeWidth="2.500" />
    </g>
    <g fill="#fff">
      <path d="M22.500 24L20 18L27 21.500L26 13.500L32 20L35 11.500L38 20L44 13.500L43 21.500L50 18L47.500 24Q35 21.500 22.500 24Z" />
      <circle cx="19.500" cy="17" r="1.200" /><circle cx="26" cy="12.500" r="1.200" /><circle cx="35" cy="11" r="1.400" /><circle cx="44" cy="12.500" r="1.200" /><circle cx="50.500" cy="17" r="1.200" />
      <path d="M24 46L34.300 50V59.500ZM36 50L46 46L36 59.500Z" />
    </g>
    <g fill="none" stroke="#fff" strokeWidth="4">
      <path d="M34.300 28.500H23V41L28 46L32.500 44V36H28.500M49.500 33V28.500H38.500V35.500L47 39.500V43L41.500 46.500L36 43" />
    </g>
  </svg>
);

const CallAddIcon = () => (
  <svg width="48" height="48" viewBox="0 0 24 24" fill={color.text}>
    <path stroke={color.text} strokeWidth="0.300" d="M6.540 5c.06.89.21 1.760.45 2.590l-1.200 1.200c-.41-1.200-.67-2.470-.76-3.790h1.510m9.860 12.020c.85.24 1.720.39 2.600.45v1.490c-1.320-.09-2.590-.35-3.800-.75l1.200-1.190M7.500 3H4c-.55 0-1 .45-1 1 0 9.390 7.610 17 17 17 .55 0 1-.45 1-1v-3.490c0-.55-.45-1-1-1-1.240 0-2.450-.2-3.570-.57-.1-.04-.21-.05-.31-.05-.26 0-.51.1-.71.29l-2.200 2.200c-2.830-1.450-5.150-3.760-6.590-6.590l2.200-2.200c.28-.28.36-.67.25-1.020C8.700 6.450 8.500 5.250 8.500 4c0-.55-.45-1-1-1z" />
    <path d="M14 7H20.500M17.200 3.700V10.300" stroke={color.text} strokeWidth="2" strokeLinecap="round" />
  </svg>
);

const MoreIcon = () => (
  <svg width="48" height="48" viewBox="0 0 48 48" fill={color.text}>
    <circle cx="24" cy="12" r="4.200" /><circle cx="24" cy="24" r="4.200" /><circle cx="24" cy="36" r="4.200" />
  </svg>
);

const TailIcon = ({ out }: { out?: boolean }) => (
  <Tail $out={out} width="15" height="22" viewBox="-1 0 15 22" fill={out ? color.outgoing : color.incoming} aria-hidden="true">
    <path d="M-1 0H11Q15 1 13.500 5L0 21L-1 21Z" />
  </Tail>
);

const TicksIcon = () => (
  <svg width="33" height="22" viewBox="0 0 33 22" fill="none" stroke={color.tick} strokeWidth="2.800" role="img" aria-label="Lu">
    <path d="M1 11L8.500 19L22 1.500M15 16L18.500 19L32 1.500" />
  </svg>
);

const HeartIcon = () => (
  <svg width="40" height="36" viewBox="0 0 40 36" role="img" aria-label="Cœur">
    <defs>
      <linearGradient id="heartFill" x1="0" y1="0" x2="0" y2="1">
        <stop offset="0" stopColor="#ff6a5e" /><stop offset="0.350" stopColor="#fb4144" /><stop offset="1" stopColor="#ee2129" />
      </linearGradient>
    </defs>
    <path d="M20 35.500C15 30 0 22 0 10.500C0 4 5 0 10.500 0C15 0 18.500 2.500 20 6C21.500 2.500 25 0 29.500 0C35 0 40 4 40 10.500C40 22 25 30 20 35.500Z" fill="url(#heartFill)" />
    <ellipse cx="9.500" cy="4.500" rx="6" ry="2.500" fill="#ff938a" opacity="0.600" /><ellipse cx="30" cy="4.500" rx="6" ry="2.500" fill="#ff938a" opacity="0.600" />
  </svg>
);

const SmileIcon = () => (
  <svg width="48" height="48" viewBox="0 0 48 48" fill="currentColor">
    <circle cx="24" cy="24" r="18" fill="none" stroke="currentColor" strokeWidth="4" />
    <circle cx="17" cy="19" r="3.200" /><circle cx="31" cy="19" r="3.200" />
    <path d="M15 28H33Q31 35 24 35Q17 35 15 28Z" />
  </svg>
);

const ClipIcon = () => (
  <svg width="25" height="40" viewBox="0 0 25 40" fill="none" stroke="currentColor" strokeWidth="3.800">
    <path d="M23 9V27.500A10.500 10.500 0 0 1 2 27.500V9A7 7 0 0 1 16 9V27A3.600 3.600 0 0 1 8.800 27V9" />
  </svg>
);

const CameraIcon = () => (
  <svg width="40" height="36" viewBox="0 0 40 36" fill="none" stroke="currentColor" strokeWidth="4" strokeLinejoin="round">
    <path d="M2 6H11.500L15 2H25.500L29 6H38V34H2Z" />
    <circle cx="20" cy="20" r="7" />
  </svg>
);

const MicIcon = () => (
  <svg width="28" height="40" viewBox="0 0 28 40" fill="none" stroke="#fff" strokeWidth="4">
    <rect x="8" y="1" width="12" height="24" rx="6" fill="#fff" stroke="none" />
    <path d="M2.500 19Q3 31 14 31Q25 31 25.500 19M14 31V39" />
  </svg>
);

/* ---------- messages ---------- */

type MessageProps = {
  text: string;
  time: string;
  out?: boolean;
  tail?: boolean;
  stacked?: boolean;
  touched?: boolean;
};

const Message = ({ text, time, out, tail, stacked, touched }: MessageProps) => (
  <Bubble $out={out} $tail={tail} $stacked={stacked}>
    {tail && <TailIcon out={out} />}
    <BubbleText $stacked={stacked}>{text}</BubbleText>
    <Meta $out={out}>
      <time>{time}</time>
      {out && <TicksIcon />}
    </Meta>
    {touched && <TouchSpot />}
  </Bubble>
);

export default function App() {
  return (
    <>
      <GlobalStyle />
      <Screen>
        <StatusBar>
          <StatusGroup $gap={14}>
            <Clock>18:53</Clock>
            <OfficeIcon />
            <NoteIcon />
            <PersonIcon />
            <DotIcon />
          </StatusGroup>
          <StatusGroup $gap={8}>
            <AlarmIcon />
            <HotspotIcon />
            <DataIcon />
            <Signal>
              <BarsIcon />
              <NetworkLabel>4G</NetworkLabel>
            </Signal>
            <Speed>4,4<br />K/s</Speed>
            <StatusGroup $gap={4}>
              <FlaskIcon />
              <BatteryBox>
                <BatteryIcon />
                <BatteryLevel>61</BatteryLevel>
              </BatteryBox>
            </StatusGroup>
          </StatusGroup>
        </StatusBar>

        <AppBar>
          <BackButton aria-label="Retour">
            <BackIcon />
            <Avatar />
          </BackButton>
          <Contact>
            <ContactName>Ghano Store</ContactName>
            <ContactKind>Compte professionnel</ContactKind>
          </Contact>
          <BarActions>
            <button aria-label="Appeler"><CallAddIcon /></button>
            <button aria-label="Plus d’options"><MoreIcon /></button>
          </BarActions>
        </AppBar>

        <Chat>
          <Doodles />
          <MessageList>
            <Group>
              <Message text="Dit manha" time="19:47" />
              <Message text="Offert ta3e 10 pièces we 6 pièces" time="19:47" />
            </Group>
            <Group $out>
              <Message out tail text="Oui" time="19:51" />
              <Message out stacked text="Donc rek tekhdem m3a Alger" time="19:51" />
            </Group>
            <Group>
              <Message tail text="Ma3akoum kml hh" time="19:54" />
            </Group>
            <Group $out>
              <Message out tail text="hhh mare7ba" time="19:54" />
              <Message out touched text="kechma te7tadj rena hna" time="19:54" />
            </Group>
            <Group>
              <Message tail text="Allah yahafdeke hbb" time="20:21" />
              <Reaction aria-label="Réaction"><HeartIcon /></Reaction>
            </Group>
            <DayMark>Aujourd’hui</DayMark>
            <Group>
              <Message tail text="Zidli 3 écran" time="14:39" />
              <Message text="Mp341cq" time="14:39" />
            </Group>
            <Group $out>
              <Message out tail text="black wela white" time="16:05" />
            </Group>
            <Group>
              <Message tail text="White 2 black 1" time="16:07" />
            </Group>
          </MessageList>

          <Composer onSubmit={(e) => e.preventDefault()}>
            <Field>
              <button type="button" aria-label="Emoji"><SmileIcon /></button>
              <Caret />
              <TextBox type="text" placeholder="Message" aria-label="Message" />
              <FieldActions>
                <button type="button" aria-label="Joindre"><ClipIcon /></button>
                <button type="button" aria-label="Appareil photo"><CameraIcon /></button>
              </FieldActions>
            </Field>
            <MicButton type="button" aria-label="Message vocal"><MicIcon /></MicButton>
          </Composer>
        </Chat>

        <NavBar>
          <NavButton aria-label="Applications récentes">
            <svg width="32" height="32" viewBox="0 0 32 32" fill="none" stroke="#6a7074" strokeWidth="4"><path d="M2 2H30V30H2Z" /></svg>
          </NavButton>
          <NavButton aria-label="Accueil">
            <svg width="36" height="36" viewBox="0 0 36 36" fill="none" stroke="#6a7074" strokeWidth="4"><circle cx="18" cy="18" r="16" /></svg>
          </NavButton>
          <NavButton aria-label="Précédent">
            <svg width="30" height="36" viewBox="0 0 30 36" fill="none" stroke="#6a7074" strokeWidth="4" strokeLinejoin="round"><path d="M28 3V33L2 18Z" /></svg>
          </NavButton>
        </NavBar>
      </Screen>
    </>
  );
}
